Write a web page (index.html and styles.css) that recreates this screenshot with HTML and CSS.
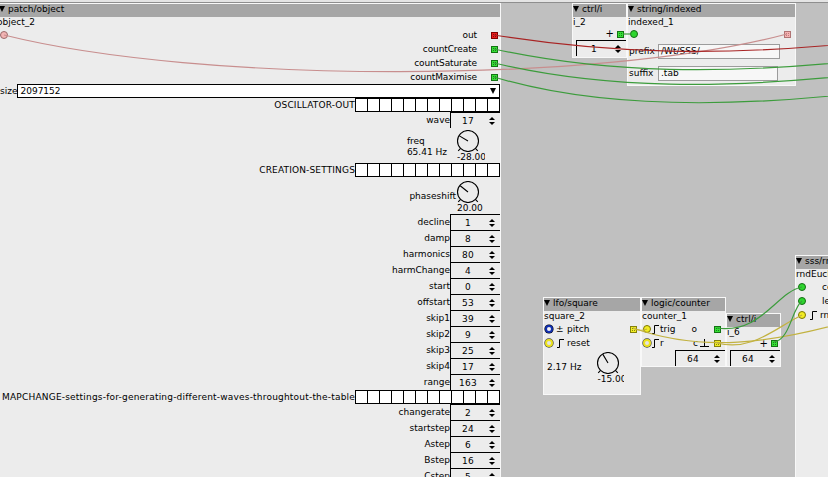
FILE: index.html
```html
<!DOCTYPE html>
<html>
<head>
<meta charset="utf-8">
<title>patch</title>
<link rel="stylesheet" href="styles.css">
</head>
<body>
<div class="topbar"></div>
<div class="canvas">

  <div class="obj o-main">
    <div class="hdr">patch/object</div>
    <div class="inst">object_2</div>
    <div class="main-io">
      <div class="in-col"><div class="iorow"><span class="inl fill pink"></span></div></div>
      <div class="out-col">
        <div class="iorow"><span class="olbl">out</span><span class="outl red"></span></div>
        <div class="iorow"><span class="olbl">countCreate</span><span class="outl green"></span></div>
        <div class="iorow"><span class="olbl">countSaturate</span><span class="outl green"></span></div>
        <div class="iorow"><span class="olbl">countMaximise</span><span class="outl green"></span></div>
      </div>
    </div>
    <div class="combo-row"><span class="clbl">size</span><div class="combo"><span>2097152</span><span class="carr"></span></div></div>
    <div class="params">
      <div class="grow"><span class="lbl caps">OSCILLATOR-OUT</span><div class="bits"><i></i><i></i><i></i><i></i><i></i><i></i><i></i><i></i><i></i><i></i><i></i><i></i></div></div>
      <div class="srow"><span class="lbl">wave</span><div class="spin"><span class="val">17</span><span class="arr"></span></div></div>
      <div class="freq-row">
        <div class="dtext"><div>freq</div><div>65.41 Hz</div></div>
        <div class="knob">
          <svg class="kn" width="30" height="22" viewBox="0 0 30 22"><circle cx="12" cy="11" r="10.5"/><path d="M4.6 18.4 L2.2 20.8 M19.4 18.4 L21.8 20.8 M12 11 L3.4 5.9"/></svg>
          <div class="kval">-28.00</div>
        </div>
      </div>
      <div class="grow"><span class="lbl caps">CREATION-SETTINGS</span><div class="bits"><i></i><i></i><i></i><i></i><i></i><i></i><i></i><i></i><i></i><i></i><i></i><i></i></div></div>
      <div class="phase-row">
        <span class="plbl">phaseshift</span>
        <div class="knob pk">
          <svg class="kn" width="30" height="22" viewBox="0 0 30 22"><circle cx="12" cy="11" r="10.5"/><path d="M4.6 18.4 L2.2 20.8 M19.4 18.4 L21.8 20.8 M12 11 L4.2 4.7"/></svg>
          <div class="kval">20.00</div>
        </div>
      </div>
      <div class="srow"><span class="lbl">decline</span><div class="spin"><span class="val">1</span><span class="arr"></span></div></div>
      <div class="srow"><span class="lbl">damp</span><div class="spin"><span class="val">8</span><span class="arr"></span></div></div>
      <div class="srow"><span class="lbl">harmonics</span><div class="spin"><span class="val">80</span><span class="arr"></span></div></div>
      <div class="srow"><span class="lbl">harmChange</span><div class="spin"><span class="val">4</span><span class="arr"></span></div></div>
      <div class="srow"><span class="lbl">start</span><div class="spin"><span class="val">0</span><span class="arr"></span></div></div>
      <div class="srow"><span class="lbl">offstart</span><div class="spin"><span class="val">53</span><span class="arr"></span></div></div>
      <div class="srow"><span class="lbl">skip1</span><div class="spin"><span class="val">39</span><span class="arr"></span></div></div>
      <div class="srow"><span class="lbl">skip2</span><div class="spin"><span class="val">9</span><span class="arr"></span></div></div>
      <div class="srow"><span class="lbl">skip3</span><div class="spin"><span class="val">25</span><span class="arr"></span></div></div>
      <div class="srow"><span class="lbl">skip4</span><div class="spin"><span class="val">17</span><span class="arr"></span></div></div>
      <div class="srow"><span class="lbl">range</span><div class="spin"><span class="val">163</span><span class="arr"></span></div></div>
      <div class="grow"><span class="lbl longcap">MAPCHANGE-settings-for-generating-different-waves-throughtout-the-table</span><div class="bits"><i></i><i></i><i></i><i></i><i></i><i></i><i></i><i></i><i></i><i></i><i></i><i></i></div></div>
      <div class="srow"><span class="lbl">changerate</span><div class="spin"><span class="val">2</span><span class="arr"></span></div></div>
      <div class="srow"><span class="lbl">startstep</span><div class="spin"><span class="val">24</span><span class="arr"></span></div></div>
      <div class="srow"><span class="lbl">Astep</span><div class="spin"><span class="val">6</span><span class="arr"></span></div></div>
      <div class="srow"><span class="lbl">Bstep</span><div class="spin"><span class="val">16</span><span class="arr"></span></div></div>
      <div class="srow"><span class="lbl">Cstep</span><div class="spin"><span class="val">5</span><span class="arr"></span></div></div>
    </div>
  </div>

  <div class="obj o-ctrl1">
    <div class="hdr">ctrl/i</div>
    <div class="inst">i_2</div>
    <div class="crow"><span class="plus">+</span><span class="outl green"></span></div>
    <div class="spin cspin"><span class="val">1</span><span class="arr"></span></div>
  </div>

  <div class="obj o-str">
    <div class="hdr">string/indexed</div>
    <div class="inst">indexed_1</div>
    <div class="srow-io"><span class="inl fill green"></span><span class="outl pinkq"></span></div>
    <div class="frow first"><span class="flbl">prefix</span><div class="field f1">/Wt/SSS/</div></div>
    <div class="frow second"><span class="flbl">suffix</span><div class="field f2">.tab</div></div>
  </div>

  <div class="obj o-lfo">
    <div class="hdr">lfo/square</div>
    <div class="inst">square_2</div>
    <div class="lrow">
      <span class="inl ring blue"></span><span class="pm">±</span><span class="ilbl">pitch</span>
      <span class="outl yellow push"></span>
    </div>
    <div class="lrow">
      <span class="inl ring yellow"></span>
      <svg class="step" width="7" height="9" viewBox="0 0 7 9"><path d="M0 8.5 H2.5 V0.5 H7"/></svg>
      <span class="ilbl">reset</span>
    </div>
    <div class="lfo-dial">
      <span class="hz">2.17 Hz</span>
      <div class="knob">
        <svg class="kn" width="30" height="22" viewBox="0 0 30 22"><circle cx="12" cy="11" r="10.5"/><path d="M4.6 18.4 L2.2 20.8 M19.4 18.4 L21.8 20.8 M12 11 L6.9 2.4"/></svg>
        <div class="kval lv">-15.00</div>
      </div>
    </div>
  </div>

  <div class="obj o-cnt">
    <div class="hdr">logic/counter</div>
    <div class="inst">counter_1</div>
    <div class="lrow">
      <span class="inl fill yellow"></span>
      <svg class="step cs" width="7" height="9" viewBox="0 0 7 9"><path d="M0 8.5 H2.5 V0.5 H7"/></svg>
      <span class="ilbl">trig</span>
      <span class="olab push">o</span><span class="outl green"></span>
    </div>
    <div class="lrow">
      <span class="inl ring yellow"></span>
      <svg class="step cs" width="7" height="9" viewBox="0 0 7 9"><path d="M0 8.5 H2.5 V0.5 H7"/></svg>
      <span class="ilbl">r</span>
      <span class="olab c push">c</span>
      <svg class="perp" width="9" height="8" viewBox="0 0 9 8"><path d="M0 7.5 H9 M4.5 0 V7.5"/></svg>
      <span class="outl yellow"></span>
    </div>
    <div class="spin rspin"><span class="val">64</span><span class="arr"></span></div>
  </div>

  <div class="obj o-ctrl2">
    <div class="hdr">ctrl/i</div>
    <div class="inst">i_6</div>
    <div class="crow c2"><span class="plus">+</span><span class="outl green"></span></div>
    <div class="spin cspin"><span class="val">64</span><span class="arr"></span></div>
  </div>

  <div class="obj o-sss">
    <div class="hdr">sss/rndEuclid</div>
    <div class="inst">rndEuclid_1</div>
    <div class="xrow"><span class="inl fill green"></span><span class="xlbl">count</span></div>
    <div class="xrow"><span class="inl fill green"></span><span class="xlbl">length</span></div>
    <div class="xrow"><span class="inl fill yellow"></span>
      <svg class="step xs" width="7" height="9" viewBox="0 0 7 9"><path d="M0 8.5 H2.5 V0.5 H7"/></svg>
      <span class="xlbl x3">rnd</span></div>
  </div>

</div>

<svg class="wires" width="828" height="477" viewBox="0 0 828 477">
  <path class="w-pink" d="M787 34 C600 84 200 84 4 35"/>
  <path class="w-red" d="M494 35 C600 52 720 60 900 38"/>
  <path class="w-green" d="M494 49 C600 72 720 78 900 56"/>
  <path class="w-green" d="M494 63 C600 88 720 92 900 70"/>
  <path class="w-green" d="M494 77 C590 106 720 112 900 88"/>
  <path class="w-green" d="M623 34 L631 34"/>
  <path class="w-yellow" d="M633 328 C638 331 642 331 647 329"/>
  <path class="w-yellow" d="M633 328 C700 352 770 345 860 318"/>
  <path class="w-yellow" d="M717 343 C752 352 775 328 802 315"/>
  <path class="w-green" d="M717 328 C762 334 776 292 802 287"/>
  <path class="w-green" d="M774 342 C790 340 792 308 802 301"/>
</svg>
</body>
</html>
```

FILE: styles.css
```css
* { box-sizing: border-box; }

html, body {
  margin: 0;
  padding: 0;
  width: 828px;
  height: 477px;
  overflow: hidden;
}

body {
  position: relative;
  background: #c0c0c0;
  font-family: "DejaVu Sans", sans-serif;
  font-size: 9px;
  color: #000;
}

.topbar {
  height: 3px;
  background: #e4e4e4;
  border-bottom: 1px solid #8e8e8e;
}

.canvas {
  position: relative;
  height: 474px;
  overflow: hidden;
}

/* generic object */
.obj {
  position: absolute;
  background: #ececec;
  border: 1px solid #f8f8f8;
  display: flex;
  flex-direction: column;
  overflow: hidden;
  white-space: nowrap;
}

.hdr {
  flex: none;
  height: 13px;
  line-height: 11px;
  background: #a6a6a6;
  overflow: hidden;
}

.hdr::before {
  content: "";
  display: inline-block;
  border-left: 3px solid transparent;
  border-right: 3px solid transparent;
  border-top: 6px solid #000;
  margin-right: 3px;
}

.inst {
  flex: none;
  height: 11px;
  line-height: 11px;
}

/* ports */
.inl {
  flex: none;
  width: 8px;
  height: 8px;
  border-radius: 50%;
}
.inl.fill.pink { background: #f2b4b4; border: 1px solid #9a6a6a; }
.inl.fill.green { background: #2ed62e; border: 1px solid #146c14; }
.inl.fill.yellow { background: #f2ec22; border: 1px solid #7c7600; }
.inl.ring.blue { border: 2px solid #1230b0; background: #f4f4f4; box-shadow: 0 0 0 0.6px #000; }
.inl.ring.yellow { border: 2px solid #ece21e; background: #e4e4e4; box-shadow: 0 0 0 0.7px #444; }

.outl {
  flex: none;
  width: 7px;
  height: 7px;
  border: 1px solid;
  outline: 1px dotted rgba(0, 0, 0, 0.45);
  outline-offset: -3px;
}
.outl.red { background: #ec1c1c; border-color: #800000; }
.outl.green { background: #34e034; border-color: #137313; }
.outl.yellow { background: #f2ee22; border-color: #84800a; }
.outl.pinkq { background: #f4b2b2; border-color: #b07474; outline-color: rgba(120, 40, 40, 0.4); }

.push { margin-left: auto; }

/* main object */
.o-main {
  left: -4px;
  top: 0;
  width: 505px;
  height: 480px;
}
.o-main .hdr { padding-left: 2px; }

.main-io {
  display: flex;
  justify-content: space-between;
}
.iorow {
  height: 14px;
  display: flex;
  align-items: center;
  justify-content: flex-end;
}
.in-col .iorow { justify-content: flex-start; padding-left: 3px; }
.out-col .olbl { letter-spacing: -0.1px; }
.out-col .outl { margin-left: 14px; margin-right: 2px; }

.combo-row {
  display: flex;
  height: 14px;
  padding-left: 3px;
  line-height: 14px;
}
.combo {
  flex: 1;
  display: flex;
  align-items: center;
  justify-content: space-between;
  border: 1px solid #000;
  background: #fff;
  padding-left: 2px;
  line-height: 12px;
}
.carr {
  border-left: 3px solid transparent;
  border-right: 3px solid transparent;
  border-top: 6px solid #000;
  margin-right: 3px;
}

.params {
  display: flex;
  flex-direction: column;
  align-items: flex-end;
}

.grow {
  display: flex;
  height: 14px;
}
.grow .lbl { line-height: 14px; }
.lbl.caps { letter-spacing: 0.15px; }
.lbl.longcap { letter-spacing: 0.2px; }

.bits {
  display: flex;
  width: 145px;
  height: 14px;
  border: 1px solid #000;
  border-right: none;
  background: #fff;
}
.bits i {
  width: 12px;
  border-right: 1px solid #000;
}

.srow {
  display: flex;
  height: 16px;
}
.srow .lbl { line-height: 16px; }

.spin {
  width: 50px;
  height: 16px;
  border-top: 1px solid #000;
  border-left: 1px solid #000;
  display: flex;
  align-items: center;
  flex: none;
}
.val {
  flex: 1;
  text-align: center;
  letter-spacing: 0.3px;
}
.arr {
  display: flex;
  flex-direction: column;
  gap: 2px;
  margin: 0 5px 0 4px;
}
.arr::before {
  content: "";
  border-left: 3px solid transparent;
  border-right: 3px solid transparent;
  border-bottom: 3px solid #000;
}
.arr::after {
  content: "";
  border-left: 3px solid transparent;
  border-right: 3px solid transparent;
  border-top: 3px solid #000;
}

/* dials */
.knob {
  width: 30px;
  display: flex;
  flex-direction: column;
}
.kn {
  display: block;
  margin-top: 2px;
  fill: none;
  stroke: #000;
  stroke-width: 1.1;
}
.kval {
  width: 29px;
  line-height: 10px;
  padding-left: 1px;
  overflow: hidden;
}

.freq-row {
  display: flex;
  height: 35px;
  padding-right: 14px;
}
.dtext {
  margin-top: 8px;
  margin-right: 9px;
  line-height: 11px;
}

.phase-row {
  display: flex;
  height: 37px;
  padding-right: 14px;
}
.plbl {
  margin-top: 14px;
  line-height: 11px;
}
.pk .kn { margin-top: 4px; }

/* ctrl/i */
.o-ctrl1 {
  left: 572px;
  top: 0;
  width: 55px;
  height: 55px;
}
.crow {
  height: 12px;
  display: flex;
  align-items: center;
  justify-content: flex-end;
  padding-right: 2px;
}
.plus {
  font-size: 10px;
  line-height: 10px;
  margin-right: 3px;
}
.cspin { margin-left: 3px; }

.o-ctrl2 {
  left: 726px;
  top: 310px;
  width: 55px;
  height: 54px;
}
.o-ctrl2 .inst { height: 10px; line-height: 10px; }
.crow.c2 { height: 14px; padding-right: 2px; }

/* string/indexed */
.o-str {
  left: 627px;
  top: 0;
  width: 169px;
  height: 83px;
}
.srow-io {
  height: 12px;
  display: flex;
  align-items: center;
  justify-content: space-between;
  padding: 0 4px 0 2px;
}
.frow {
  display: flex;
  height: 15px;
  padding-left: 1px;
}
.frow.first { margin-top: 4px; }
.frow.second { margin-top: 7px; }
.flbl {
  width: 29px;
  line-height: 15px;
}
.field {
  height: 15px;
  border: 1px solid #9c9c9c;
  background: #f7f7f7;
  line-height: 13px;
  padding-left: 2px;
}
.f1 { width: 122px; }
.f2 { width: 120px; }

/* lfo/square */
.o-lfo {
  left: 543px;
  top: 294px;
  width: 98px;
  height: 98px;
}
.lrow {
  height: 14px;
  display: flex;
  align-items: center;
  padding-left: 1px;
}
.o-lfo .lrow .outl { margin-right: 3px; }
.pm { margin-left: 3px; width: 8px; }
.ilbl { margin-left: 3px; }
.step {
  flex: none;
  fill: none;
  stroke: #000;
  stroke-width: 1;
  margin-left: 4px;
}
.step.cs { margin-left: 1px; }
.step.cs + .ilbl { margin-left: 1px; }

.lfo-dial {
  display: flex;
  padding: 2px 0 0 3px;
}
.hz {
  margin-top: 10px;
  line-height: 10px;
  margin-right: 15px;
}
.lfo-dial .kn { margin-top: 0; }
.kval.lv { width: 28px; }

/* counter */
.o-cnt {
  left: 641px;
  top: 294px;
  width: 85px;
  height: 70px;
}
.o-cnt .lrow { padding-right: 4px; }
.olab { margin-right: 17px; }
.olab.c { margin-right: 2px; }
.perp {
  flex: none;
  fill: none;
  stroke: #000;
  stroke-width: 1;
  margin-right: 5px;
}
.rspin { align-self: flex-end; }

/* sss */
.o-sss {
  left: 795px;
  top: 252px;
  width: 80px;
  height: 230px;
}
.o-sss .inst { line-height: 11px; }
.xrow {
  height: 14px;
  display: flex;
  align-items: center;
  padding-left: 2px;
}
.xlbl { margin-left: 16px; }
.step.xs { margin-left: 4px; }
.xlbl.x3 { margin-left: 3px; }

/* wires */
.wires {
  position: absolute;
  left: 0;
  top: 0;
  pointer-events: none;
  fill: none;
  stroke-width: 1.2;
}
.w-pink { stroke: #c88e8e; }
.w-red { stroke: #a82424; }
.w-green { stroke: #3c9c3c; }
.w-yellow { stroke: #c2b240; }
```
